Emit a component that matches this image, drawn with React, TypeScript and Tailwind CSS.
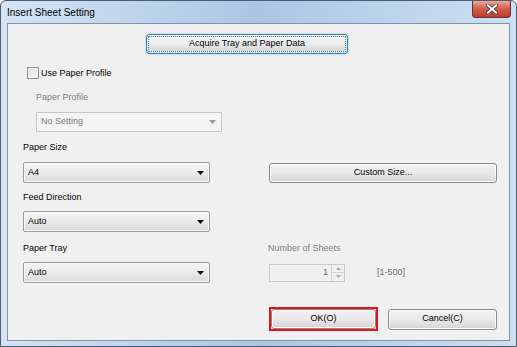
import type { ReactNode } from 'react'

const font = { fontFamily: '"Liberation Sans", Arial, sans-serif' }

function Arrow({ disabled }: { disabled?: boolean }) {
  return (
    <svg width="7" height="4" viewBox="0 0 7 4" className="mr-[5px]">
      <path d="M0 0H7L3.5 4Z" fill={disabled ? '#9a9a9a' : '#111'} />
    </svg>
  )
}

function Combo({ value, disabled, width }: { value: string; disabled?: boolean; width: string }) {
  if (disabled) {
    return (
      <div className={`${width} h-[20px] flex items-center justify-between border border-[#c5c5c5] bg-[#f4f4f4]`}>
        <span className="pl-[4px] text-[9px] text-[#7a7a7a]">{value}</span>
        <Arrow disabled />
      </div>
    )
  }
  return (
    <div className={`${width} h-[21px] flex items-center justify-between rounded-[2px] border border-[#9d9d9d] bg-gradient-to-b from-[#f4f4f4] via-[#ebebeb] to-[#d9d9d9] shadow-[inset_0_0_0_1px_#f8f8f8]`}>
      <span className="pl-[4px] text-[9px] text-black">{value}</span>
      <Arrow />
    </div>
  )
}

function Button({ children, className }: { children: ReactNode; className: string }) {
  return (
    <div
      className={`${className} flex items-center justify-center rounded-[3px] border border-[#8a8a8a] bg-gradient-to-b from-[#f2f2f2] via-[#e9e9e9] to-[#d3d3d3] shadow-[inset_0_0_0_1px_#fbfbfb] text-[9px] text-black`}
    >
      {children}
    </div>
  )
}

function Label({ children, disabled, className = '' }: { children: ReactNode; disabled?: boolean; className?: string }) {
  return (
    <div className={`h-[14px] leading-[14px] text-[9px] ${disabled ? 'text-[#7d7d7d]' : 'text-black'} ${className}`}>
      {children}
    </div>
  )
}

export default function App() {
  return (
    <div style={font} className="w-[517px] h-[347px] overflow-hidden bg-white">
      <div className="w-[517px] h-[347px] rounded-t-[6px] border border-[#4e5c6e] bg-gradient-to-r from-[#d4e4f5] via-[#aac6e4] to-[#cde0f3] flex flex-col">
        {/* Title bar */}
        <div className="h-[22px] flex items-start justify-between">
          <div className="pl-[6px] pt-[6px] text-[10px] leading-[12px] text-black">Insert Sheet Setting</div>
          <div className="mr-[5px] w-[39px] h-[17px] rounded-b-[4px] border border-t-0 border-[#6f2d2d] bg-gradient-to-b from-[#e9a99b] via-[#cf5a4a] to-[#c23a2b] flex items-center justify-center">
            <svg width="12" height="10" viewBox="0 0 12 10">
              <path d="M2 1.5L10 8.5M10 1.5L2 8.5" stroke="#3d3d3d" strokeWidth="3.6" strokeLinecap="square" />
              <path d="M2 1.5L10 8.5M10 1.5L2 8.5" stroke="#fff" strokeWidth="2" strokeLinecap="square" />
            </svg>
          </div>
        </div>

        {/* Client area */}
        <div className="ml-[6px] w-[503px] h-[318px] border border-[#8193a8] bg-[#f0f0f0] flex flex-col">
          <div className="pt-[10px] pl-[138px]">
            <div className="w-[202px] h-[20px] rounded-[3px] border border-[#3c7fb1] shadow-[0_0_2px_#8fc3ea] p-[1px] bg-gradient-to-b from-[#eaf6fd] to-[#bee6fd]">
              <div className="w-full h-full flex items-center justify-center border border-dotted border-[#5a7f9c] bg-gradient-to-b from-[#f4f4f4] via-[#ebebeb] to-[#d6d6d6] text-[9px] text-black">
                Acquire Tray and Paper Data
              </div>
            </div>
          </div>

          <div className="mt-[12px] pl-[19px] flex items-center gap-[2px]">
            <div className="w-[12px] h-[12px] border border-[#8e8f8f] bg-gradient-to-br from-[#dcdcdc] to-[#fbfbfb] shadow-[inset_0_0_0_1px_#f4f4f4]" />
            <Label>Use Paper Profile</Label>
          </div>

          <div className="pl-[28px]">
            <Label disabled className="mt-[10px]">Paper Profile</Label>
            <div className="mt-[8px]">
              <Combo value="No Setting" disabled width="w-[186px]" />
            </div>
          </div>

          <div className="pl-[15px] pr-[12px]">
            <Label className="mt-[8px]">Paper Size</Label>
            <div className="mt-[8px] flex items-center">
              <Combo value="A4" width="w-[187px]" />
              <Button className="ml-[59px] w-[228px] h-[20px]">Custom Size...</Button>
            </div>

            <Label className="mt-[7px]">Feed Direction</Label>
            <div className="mt-[7px]">
              <Combo value="Auto" width="w-[187px]" />
            </div>

            <div className="mt-[9px] flex">
              <Label className="w-[245px]">Paper Tray</Label>
              <Label disabled>Number of Sheets</Label>
            </div>
            <div className="mt-[7px] flex items-center">
              <Combo value="Auto" width="w-[187px]" />
              <div className="ml-[59px] w-[76px] h-[18px] flex border border-[#c9c9c9] bg-[#f0f0f0]">
                <div className="flex-1 flex items-center justify-end pr-[3px] text-[9px] text-[#6d6d6d]">1</div>
                <div className="w-[13px] flex flex-col border-l border-[#d0d0d0]">
                  <div className="flex-1 flex items-center justify-center border-b border-[#d0d0d0]">
                    <svg width="5" height="3" viewBox="0 0 5 3"><path d="M0 3H5L2.5 0Z" fill="#a8a8a8" /></svg>
                  </div>
                  <div className="flex-1 flex items-center justify-center">
                    <svg width="5" height="3" viewBox="0 0 5 3"><path d="M0 0H5L2.5 3Z" fill="#a8a8a8" /></svg>
                  </div>
                </div>
              </div>
              <div className="ml-[32px] text-[9px] text-[#6d6d6d]">[1-500]</div>
            </div>

            <div className="mt-[24px] flex items-center">
              <div className="ml-[246px] border-2 border-[#e8121b]">
                <Button className="w-[105px] h-[20px]">OK(O)</Button>
              </div>
              <Button className="ml-[10px] w-[109px] h-[21px]">Cancel(C)</Button>
            </div>
          </div>
        </div>
      </div>
    </div>
  )
}
